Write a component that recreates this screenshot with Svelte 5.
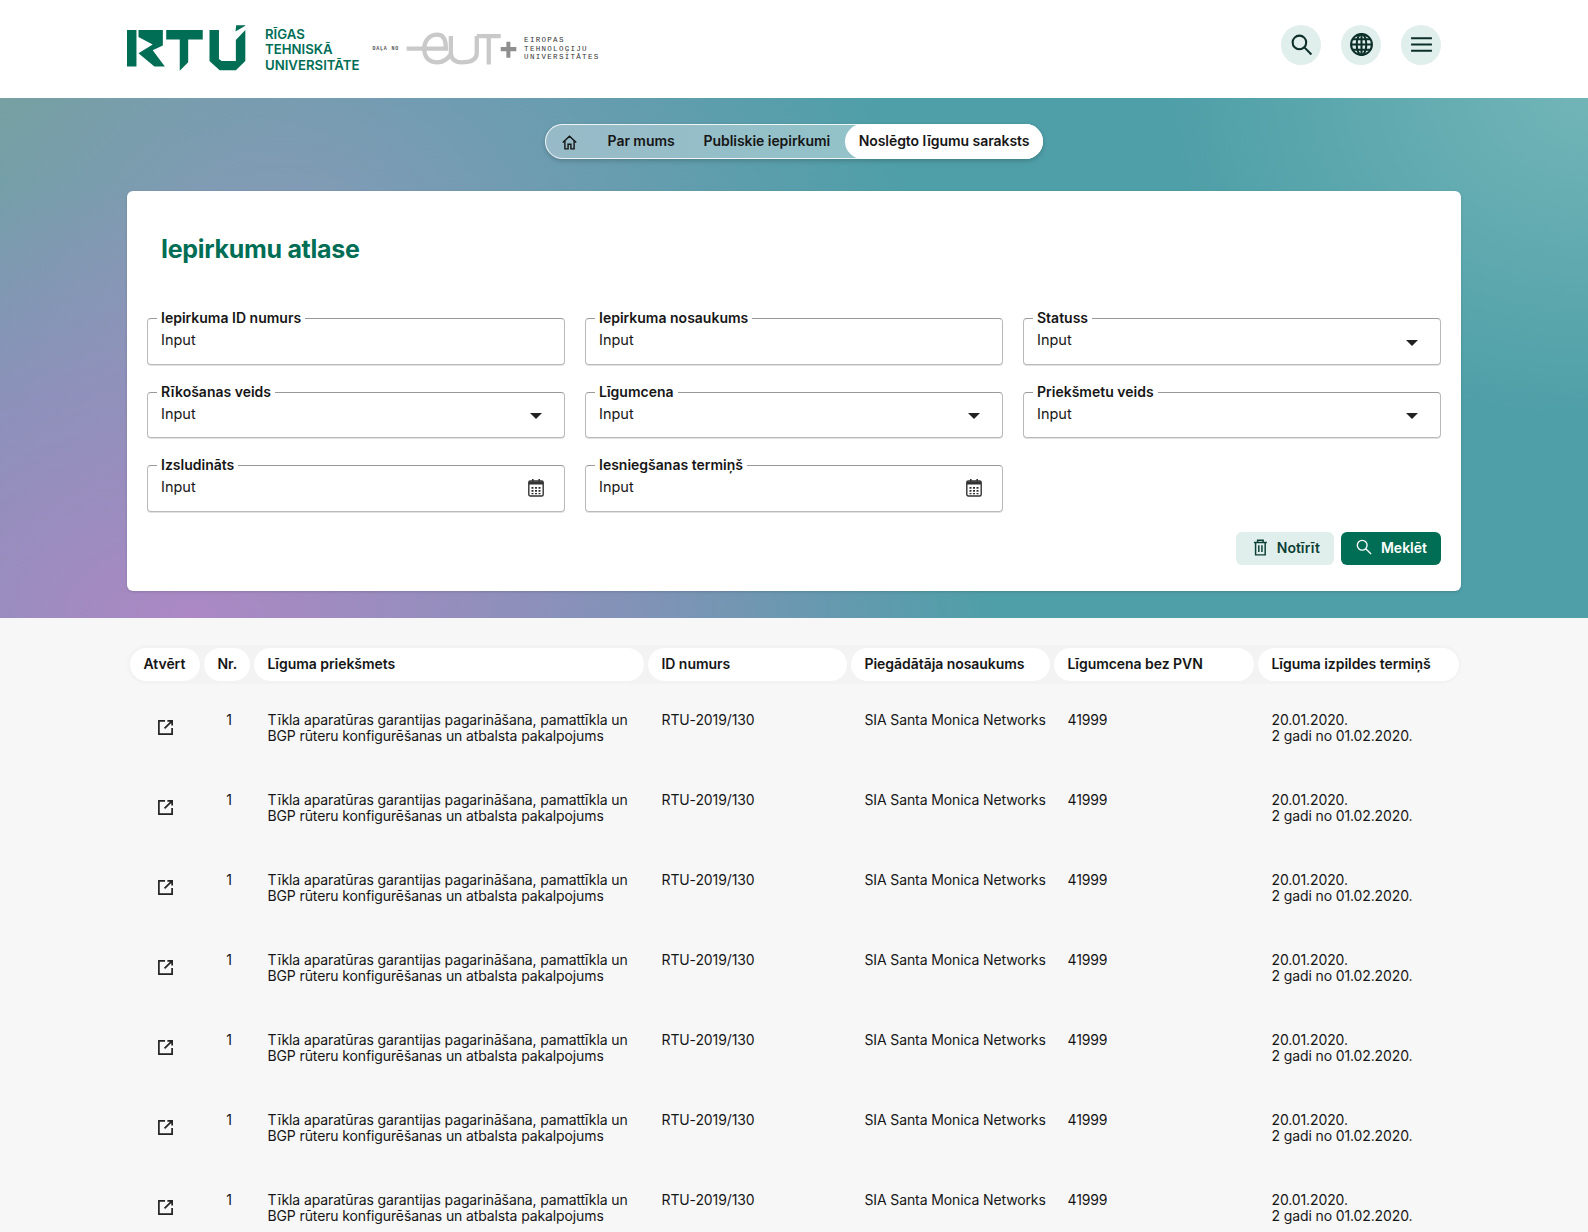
<script>
	const rows = Array(7).fill({
		nr: 1,
		subject: 'Tīkla aparatūras garantijas pagarināšana, pamattīkla un BGP rūteru konfigurēšanas un atbalsta pakalpojums',
		id: 'RTU-2019/130',
		supplier: 'SIA Santa Monica Networks',
		price: '41999'
	});
	const columns = ['Atvērt', 'Nr.', 'Līguma priekšmets', 'ID numurs', 'Piegādātāja nosaukums', 'Līgumcena bez PVN', 'Līguma izpildes termiņš'];
	const fields = [
		{ label: 'Iepirkuma ID numurs' },
		{ label: 'Iepirkuma nosaukums' },
		{ label: 'Statuss', icon: 'select' },
		{ label: 'Rīkošanas veids', icon: 'select' },
		{ label: 'Līgumcena', icon: 'select' },
		{ label: 'Priekšmetu veids', icon: 'select' },
		{ label: 'Izsludināts', icon: 'date' },
		{ label: 'Iesniegšanas termiņš', icon: 'date' }
	];
</script>

<div class="page">
	<header class="site-header">
		<div class="brand">
			<svg class="rtu-logo" viewBox="24 30 352 135" aria-label="RTU">
				<path d="M24 44h28v108H24zM58 44h72v46l-30 14 36 48h-31L58 113l42-26-42-22z" />
				<path d="M140 44h108v28h-43v68l-25 25V72h-40z" />
				<path d="M268 44h28v86l8 6h42V74l28-30v92l-28 27h-48l-30-27zM346 48l-1 0 2-18h27v2z" />
			</svg>
			<div class="rtu-name">RĪGAS<br />TEHNISKĀ<br />UNIVERSITĀTE</div>
			<div class="part-of">DAĻA NO</div>
			<svg class="eut-logo" viewBox="120 30 340 105" aria-label="EUT+">
				<path class="eut-stroke" d="M125 83H243C243 55 235 41 218 41C192 41 178 60 178 84C178 108 192 124 218 124C235 124 246 118 258 100V45M258 96C258 114 270 124 290 124C318 124 336 116 336 95V45M336 45H408M372 45V131" />
				<path class="eut-plus" d="M408 78h17V62h12v16h18v13h-18v19h-12V91h-17z" />
			</svg>
			<div class="eut-name">EIROPAS<br />TEHNOLOĢIJU<br />UNIVERSITĀTES</div>
		</div>
		<div class="header-actions">
			<button class="round-btn" aria-label="Meklēt">
				<svg viewBox="0 0 24 24"><circle cx="10" cy="10" r="6.5" /><path d="M15 15l6.5 6.5" /></svg>
			</button>
			<button class="round-btn" aria-label="Valoda">
				<svg viewBox="0 0 24 24"><circle cx="12" cy="12" r="10" /><ellipse cx="12" cy="12" rx="4.6" ry="10" /><path d="M2 12h20M3.3 7h17.4M3.3 17h17.4M12 2v20" /></svg>
			</button>
			<button class="round-btn" aria-label="Izvēlne">
				<svg viewBox="0 0 24 24"><path d="M2 6h20M2 12h20M2 18h20" /></svg>
			</button>
		</div>
	</header>

	<section class="hero">
		<nav class="crumbs">
			<span class="crumb home">
				<svg viewBox="0 0 24 24"><path d="M2.5 12L12 3l9.500 9M5.500 10v11h4.500v-6.500h4V21h4.500V10" /></svg>
			</span>
			<span class="crumb">Par mums</span>
			<span class="crumb">Publiskie iepirkumi</span>
			<span class="crumb active">Noslēgto līgumu saraksts</span>
		</nav>

		<div class="card">
			<h1>Iepirkumu atlase</h1>
			<div class="form-grid">
				{#each fields as field}
					<div class="field">
						<label>{field.label}</label>
						<span class="value">Input</span>
						{#if field.icon === 'select'}
							<span class="caret"></span>
						{:else if field.icon === 'date'}
							<svg class="calendar" viewBox="0 0 16 18">
								<path d="M4 0h1.600v2.500H4zM10.400 0H12v2.500h-1.600z" fill="#333" />
								<rect x=".8" y="2" width="14.400" height="15" rx="1.500" fill="none" stroke="#333" stroke-width="1.400" />
								<rect x="1" y="2.500" width="14" height="3" fill="#333" />
								<path d="M3.500 8h2v1.700h-2zM7 8h2v1.700H7zM10.500 8h2v1.700h-2zM3.500 11h2v1.700h-2zM7 11h2v1.700H7zM10.500 11h2v1.700h-2zM3.500 14h2v1.200h-2zM7 14h2v1.200H7zM10.500 14h2v1.200h-2z" fill="#333" />
							</svg>
						{/if}
					</div>
				{/each}
			</div>
			<div class="form-actions">
				<button class="btn light">
					<svg viewBox="0 0 16 18"><path d="M1 3.500h14M5 3V1.200h6V3M2.800 3.500V17h10.400V3.500M6.300 6.500v7.500M9.700 6.500v7.500" /></svg>
					Notīrīt
				</button>
				<button class="btn primary">
					<svg viewBox="0 0 18 18"><circle cx="7" cy="7" r="5.500" /><path d="M11 11l6 6" /></svg>
					Meklēt
				</button>
			</div>
		</div>
	</section>

	<section class="results">
		<div class="table-head">
			{#each columns as col}
				<div class="head-cell">{col}</div>
			{/each}
		</div>
		{#each rows as row}
			<div class="table-row">
				<div class="open-cell">
					<svg viewBox="0 0 18 18"><path d="M8.500 2H2v14h14V9.500M8 10l8-8M11 2h5v5" /></svg>
				</div>
				<div class="nr-cell">{row.nr}</div>
				<div class="cell">{row.subject}</div>
				<div class="cell">{row.id}</div>
				<div class="cell">{row.supplier}</div>
				<div class="cell">{row.price}</div>
				<div class="cell">20.01.2020.<br />2 gadi no 01.02.2020.</div>
			</div>
		{/each}
	</section>
</div>

<style>
	:global(body) {
		margin: 0;
		background: #f7f7f7;
		color: #161616;
		font-family: Inter, "Liberation Sans", sans-serif;
	}
	.page {
		height: 100vh;
		overflow: hidden;
	}
	.site-header {
		display: flex;
		align-items: center;
		justify-content: space-between;
		height: 98px;
		padding: 0 147px 0 127px;
		background: #fff;
	}
	.brand {
		display: flex;
		align-items: center;
	}
	.rtu-logo {
		width: 119px;
		height: 46px;
		fill: #006e55;
		margin-top: -2px;
	}
	.rtu-name {
		margin-left: 19px;
		font-size: 13.2px;
		line-height: 15.6px;
		font-weight: 600;
		color: #006e55;
		margin-top: 2px;
	}
	.part-of {
		margin-left: 13px;
		font-family: "Liberation Mono", monospace;
		font-size: 5px;
		letter-spacing: 0.8px;
		font-weight: 700;
		color: #555;
	}
	.eut-logo {
		width: 113px;
		height: 35px;
		margin-left: 6px;
		margin-top: -2px;
	}
	.eut-stroke {
		fill: none;
		stroke: #c9c9c9;
		stroke-width: 13;
	}
	.eut-plus {
		fill: #8f8f8f;
	}
	.eut-name {
		margin-left: 6px;
		font-family: "Liberation Mono", monospace;
		font-size: 7.500px;
		line-height: 8.500px;
		letter-spacing: 1.300px;
		color: #333;
	}
	.header-actions {
		display: flex;
		gap: 20px;
		padding-bottom: 9px;
	}
	.round-btn {
		display: flex;
		align-items: center;
		justify-content: center;
		width: 40px;
		height: 40px;
		padding: 0;
		border: none;
		border-radius: 50%;
		background: #e1efec;
	}
	.round-btn svg {
		width: 25px;
		height: 25px;
		fill: none;
		stroke: #0c2f2a;
		stroke-width: 2;
	}
	.hero {
		height: 520px;
		box-sizing: border-box;
		padding-top: 26px;
		background:
			radial-gradient(420px 320px at 100% 0%, rgba(125, 188, 188, 0.75), transparent),
			radial-gradient(800px 440px at 12% 100%, rgba(172, 136, 196, 1) 0%, rgba(172, 136, 196, 0.55) 55%, transparent 100%),
			radial-gradient(620px 440px at 18% 25%, rgba(136, 154, 184, 0.95), transparent),
			radial-gradient(420px 300px at 0% 0%, rgba(105, 165, 145, 1), transparent),
			#4f9fa8;
	}
	.crumbs {
		display: flex;
		align-items: center;
		width: fit-content;
		height: 35px;
		margin: 0 auto 32px;
		box-sizing: border-box;
		border: 1px solid rgba(255, 255, 255, 0.85);
		border-radius: 18px;
		background: linear-gradient(90deg, rgba(255, 255, 255, 0.3), rgba(255, 255, 255, 0.42));
		box-shadow: 0 2px 5px rgba(0, 0, 0, 0.2);
		font-size: 14px;
		letter-spacing: -0.06px;
		font-weight: 600;
		line-height: 16px;
		padding-bottom: 1px;
	}
	.crumb {
		padding: 0 14.500px;
		white-space: nowrap;
	}
	.home {
		display: flex;
		padding: 2px 15.500px 0 15px;
	}
	.home svg {
		width: 17px;
		height: 17px;
		fill: none;
		stroke: #161616;
		stroke-width: 2;
	}
	.active {
		display: flex;
		align-items: center;
		height: 35px;
		box-sizing: border-box;
		margin: 0 -1px -1px 0;
		padding: 0 14px 2px;
		border-radius: 18px;
		background: #fff;
	}
	.card {
		width: 1334px;
		height: 400px;
		margin: 0 auto;
		box-sizing: border-box;
		padding: 41px 20px 0;
		border-radius: 6px;
		background: #fff;
		box-shadow: 0 1px 3px rgba(0, 0, 0, 0.15);
	}
	h1 {
		margin: 0 0 52px 14px;
		font-size: 25px;
		line-height: 34px;
		letter-spacing: -0.3px;
		font-weight: 700;
		color: #006e55;
	}
	.form-grid {
		display: grid;
		grid-template-columns: repeat(3, 1fr);
		gap: 27px 20px;
	}
	.field {
		position: relative;
		display: flex;
		align-items: center;
		justify-content: space-between;
		height: 46.500px;
		box-sizing: border-box;
		padding: 0 21px 3px 13px;
		border: 1px solid #b9b9b9;
		border-top-color: #999;
		border-radius: 4px;
		box-shadow: 0 1px 0 #e2e2e2;
		font-size: 14.500px;
	}
	label {
		position: absolute;
		top: -10px;
		left: 9px;
		padding: 0 4px;
		background: #fff;
		font-size: 14px;
		font-weight: 600;
		line-height: 18px;
	}
	.caret {
		margin-top: 6px;
		margin-right: 1px;
		border-top: 6px solid #222;
		border-left: 6px solid transparent;
		border-right: 6px solid transparent;
	}
	.calendar {
		width: 16px;
		height: 18px;
		margin-top: 3px;
		margin-right: -1px;
	}
	.form-actions {
		display: flex;
		justify-content: flex-end;
		gap: 7px;
		margin-top: 20px;
	}
	.btn {
		display: flex;
		align-items: center;
		gap: 9px;
		height: 33px;
		padding: 0 14px 2px;
		border: none;
		border-radius: 6px;
		font: 600 14px Inter, sans-serif;
	}
	.btn svg {
		fill: none;
		stroke: currentColor;
		stroke-width: 1.500;
	}
	.btn.light {
		width: 98px;
		padding-left: 17px;
		background: #e1efec;
		color: #0c3f36;
	}
	.btn.light svg {
		width: 15px;
		height: 17px;
		stroke-width: 1.600;
	}
	.btn.primary {
		width: 100px;
		padding-left: 15px;
		background: #006e55;
		color: #fff;
	}
	.btn.primary svg {
		width: 16px;
		height: 16px;
	}
	.results {
		width: 1328px;
		margin: 0 auto;
		padding-top: 30px;
	}
	.table-head,
	.table-row {
		display: grid;
		grid-template-columns: 70px 46px 390px 199px 199px 200px 201px;
		column-gap: 4px;
	}
	.table-head {
		margin-bottom: 1px;
		border-radius: 17px;
		background: #f3f3f3;
		box-shadow: 0 0 0 3px #f3f3f3;
	}
	.head-cell {
		height: 33px;
		box-sizing: border-box;
		display: flex;
		align-items: center;
		padding: 0 13.500px 2px;
		border-radius: 17px;
		background: #fff;
		font-size: 14px;
		letter-spacing: -0.05px;
		font-weight: 600;
		white-space: nowrap;
	}
	.table-row {
		height: 80px;
		box-sizing: border-box;
		padding-top: 30px;
		font-size: 14px;
		letter-spacing: -0.12px;
		line-height: 16.200px;
	}
	.open-cell {
		display: flex;
		justify-content: center;
		height: 30px;
		align-items: center;
	}
	.open-cell svg {
		width: 17px;
		height: 17px;
		margin-left: 1px;
		fill: none;
		stroke: #222;
		stroke-width: 1.800;
	}
	.nr-cell {
		text-align: center;
		padding-left: 4px;
	}
	.cell {
		padding-left: 13.500px;
	}
</style>
